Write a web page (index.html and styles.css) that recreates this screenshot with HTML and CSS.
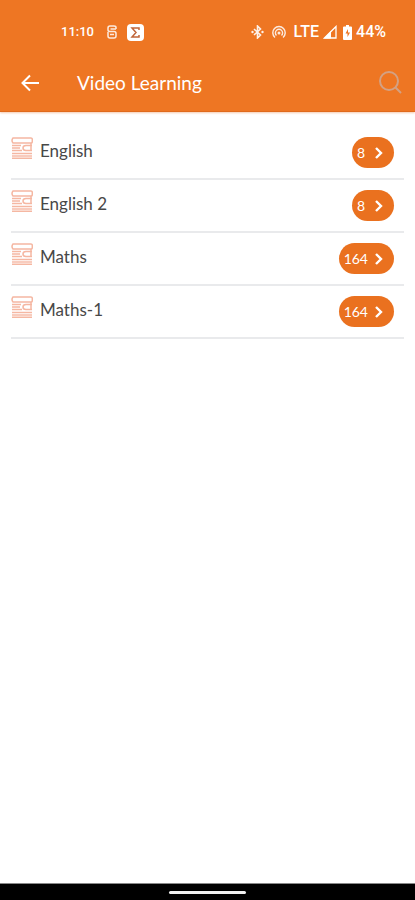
FILE: index.html
```html
<!DOCTYPE html>
<html lang="en">
<head>
<meta charset="utf-8">
<meta name="viewport" content="width=device-width, initial-scale=1">
<title>Video Learning</title>
<link rel="stylesheet" href="styles.css">
</head>
<body>
<svg class="defs" aria-hidden="true">
  <symbol id="books" viewBox="0 0 22 22">
    <g fill="none" stroke="currentColor" stroke-width="1.500">
      <path d="M2 1h18q1.300 0 1.300 1.500v2Q21.300 6 20 6H2Q0 3.500 2 1z"/>
      <path d="M1 8.500h9M1 11h8M1 13.500h10M21 8.500h-6q-3 0-3 2.500t3 2.500h6M20 6v8"/>
      <path d="M1 16.500h20M1 21.200h20"/>
    </g>
    <path d="M1 18h20v2H1z" fill="currentColor" opacity="0.7"/>
  </symbol>
  <symbol id="chevron" viewBox="0 0 10 14">
    <path d="M2 2l5 5-5 5" fill="none" stroke="currentColor" stroke-width="2.400"/>
  </symbol>
</svg>
<header class="top">
  <div class="status">
    <span class="time">11:10</span>
    <svg class="app-s" width="12" height="16" viewBox="0 0 12 16"><path d="M10 5V3.500Q10 2 8 2H4Q2 2 2 4v2q0 1.500 2 1.500h4q2 0 2 2V12q0 2-2 2H4q-2 0-2-2V8M4.500 5H10M4 10.500h4" fill="none" stroke="currentColor" stroke-width="1.500"/></svg>
    <svg class="app-sigma" width="17" height="17" viewBox="0 0 17 17"><rect width="17" height="17" rx="4" fill="currentColor"/><path d="M12 6V4H5l4 4.500L5 13h7v-2" fill="none" stroke="#c0653a" stroke-width="1.500"/></svg>
    <svg class="bluetooth" width="13" height="14" viewBox="0 0 13 14"><path d="M3 4l6.500 6L6.500 13V1l3 3L3 10" fill="none" stroke="currentColor" stroke-width="1.600"/><circle cx="1.500" cy="7" r="1.200" fill="currentColor"/><circle cx="11.500" cy="7" r="1.200" fill="currentColor"/></svg>
    <svg class="hotspot" width="14" height="14" viewBox="0 0 14 14"><g fill="none" stroke="currentColor" stroke-width="1.400"><path d="M3 12.500a6.200 6.200 0 1 1 8 0"/><path d="M4.500 10.500a3.600 3.600 0 1 1 5 0"/></g><circle cx="7" cy="8" r="1.500" fill="currentColor"/></svg>
    <span class="network">LTE</span>
    <svg class="signal" width="14" height="14" viewBox="0 0 14 14"><path d="M1.500 13H13V1.500z" fill="none" stroke="currentColor" stroke-width="1.300"/><path d="M1 13.500L8 6v7.500z" fill="currentColor"/></svg>
    <svg class="battery" width="9" height="15" viewBox="0 0 9 15"><path d="M3 0h3v1.500h2q1 0 1 1V14q0 1-1 1H1q-1 0-1-1V2.500q0-1 1-1h2z" fill="currentColor"/><path d="M5 4L2.500 8.500h2V12L7 7.500H5z" fill="#ee7623"/></svg>
    <span class="percent">44%</span>
  </div>
  <div class="bar">
    <button class="icon-button" type="button" aria-label="Back"><svg width="18" height="18" viewBox="0 0 18 18"><path d="M18 9H2M9 1.500L1.500 9 9 16.500" fill="none" stroke="currentColor" stroke-width="2"/></svg></button>
    <h1>Video Learning</h1>
    <button class="icon-button search" type="button" aria-label="Search"><svg width="24" height="24" viewBox="0 0 24 24"><g fill="none" stroke="currentColor" stroke-width="2"><circle cx="11" cy="10" r="9"/><path d="M17.500 16.500L23 22"/></g></svg></button>
  </div>
</header>
<main>
  <ul class="list">
    <li><a href="#english"><svg class="books"><use href="#books"/></svg><span class="name">English</span><span class="pill">8<svg class="chevron"><use href="#chevron"/></svg></span></a></li>
    <li><a href="#english-2"><svg class="books"><use href="#books"/></svg><span class="name">English 2</span><span class="pill">8<svg class="chevron"><use href="#chevron"/></svg></span></a></li>
    <li><a href="#maths"><svg class="books"><use href="#books"/></svg><span class="name">Maths</span><span class="pill">164<svg class="chevron"><use href="#chevron"/></svg></span></a></li>
    <li><a href="#maths-1"><svg class="books"><use href="#books"/></svg><span class="name">Maths-1</span><span class="pill">164<svg class="chevron"><use href="#chevron"/></svg></span></a></li>
  </ul>
</main>
<footer class="system-nav"><span class="handle"></span></footer>
</body>
</html>
```
FILE: styles.css
```css
* { box-sizing: border-box; }

body {
  margin: 0;
  min-height: 100vh;
  display: flex;
  flex-direction: column;
  background: #fff;
  color: #484848;
  font-family: Lato, sans-serif;
}

.defs { position: absolute; width: 0; height: 0; }

svg { display: block; flex: none; }

.top {
  background: #ee7623;
  color: #fff;
  border-bottom: 1px solid #e06a1c;
  box-shadow: 0 1px 2px #f5c9ae;
}

.status {
  display: flex;
  align-items: center;
  height: 56px;
  padding: 8px 29px 0 61px;
  font: 500 16px/20px Roboto, sans-serif;
}

.time { font-size: 13px; }
.app-s { margin-left: 12px; opacity: 0.85; }
.app-sigma { margin-left: 9px; }
.bluetooth { margin-left: auto; opacity: 0.9; }
.hotspot { margin-left: 8px; opacity: 0.85; }
.network { margin-left: 8px; }
.signal { margin-left: 4px; }
.battery { margin-left: 6px; }
.percent { margin-left: 4px; }

.bar {
  display: flex;
  align-items: center;
  height: 55px;
  padding: 0 13px 2px 21px;
}

.icon-button {
  display: flex;
  padding: 0;
  border: 0;
  background: none;
  color: inherit;
}

.search { margin-left: auto; color: #d3a184; }

h1 {
  margin: 0 0 0 38px;
  font-size: 19px;
  line-height: 24px;
  font-weight: 400;
}

main { flex: 1; }

.list {
  margin: 0;
  padding: 15px 11px 0 11px;
  list-style: none;
}

.list li { border-bottom: 2px solid #e9eaec; }

.list a {
  display: flex;
  align-items: flex-start;
  height: 51px;
  padding: 10px 10px 0 0;
  color: inherit;
  text-decoration: none;
}

.books { width: 22px; height: 22px; color: #f5b7a2; }

.name {
  flex: 1;
  margin-left: 7px;
  font-size: 17px;
  line-height: 28px;
}

.pill {
  display: flex;
  align-items: center;
  justify-content: space-between;
  gap: 6px;
  min-width: 42px;
  height: 31px;
  padding: 0 10px 0 5px;
  border-radius: 16px;
  background: #ea711f;
  color: #fff;
  font-size: 14px;
  line-height: 24px;
}

.chevron { width: 10px; height: 14px; }

.system-nav {
  display: flex;
  align-items: center;
  justify-content: center;
  height: 17px;
  border-top: 1px solid #888;
  background: #000;
}

.handle {
  width: 77px;
  height: 3px;
  border-radius: 2px;
  background: #f2f2f2;
}
```
